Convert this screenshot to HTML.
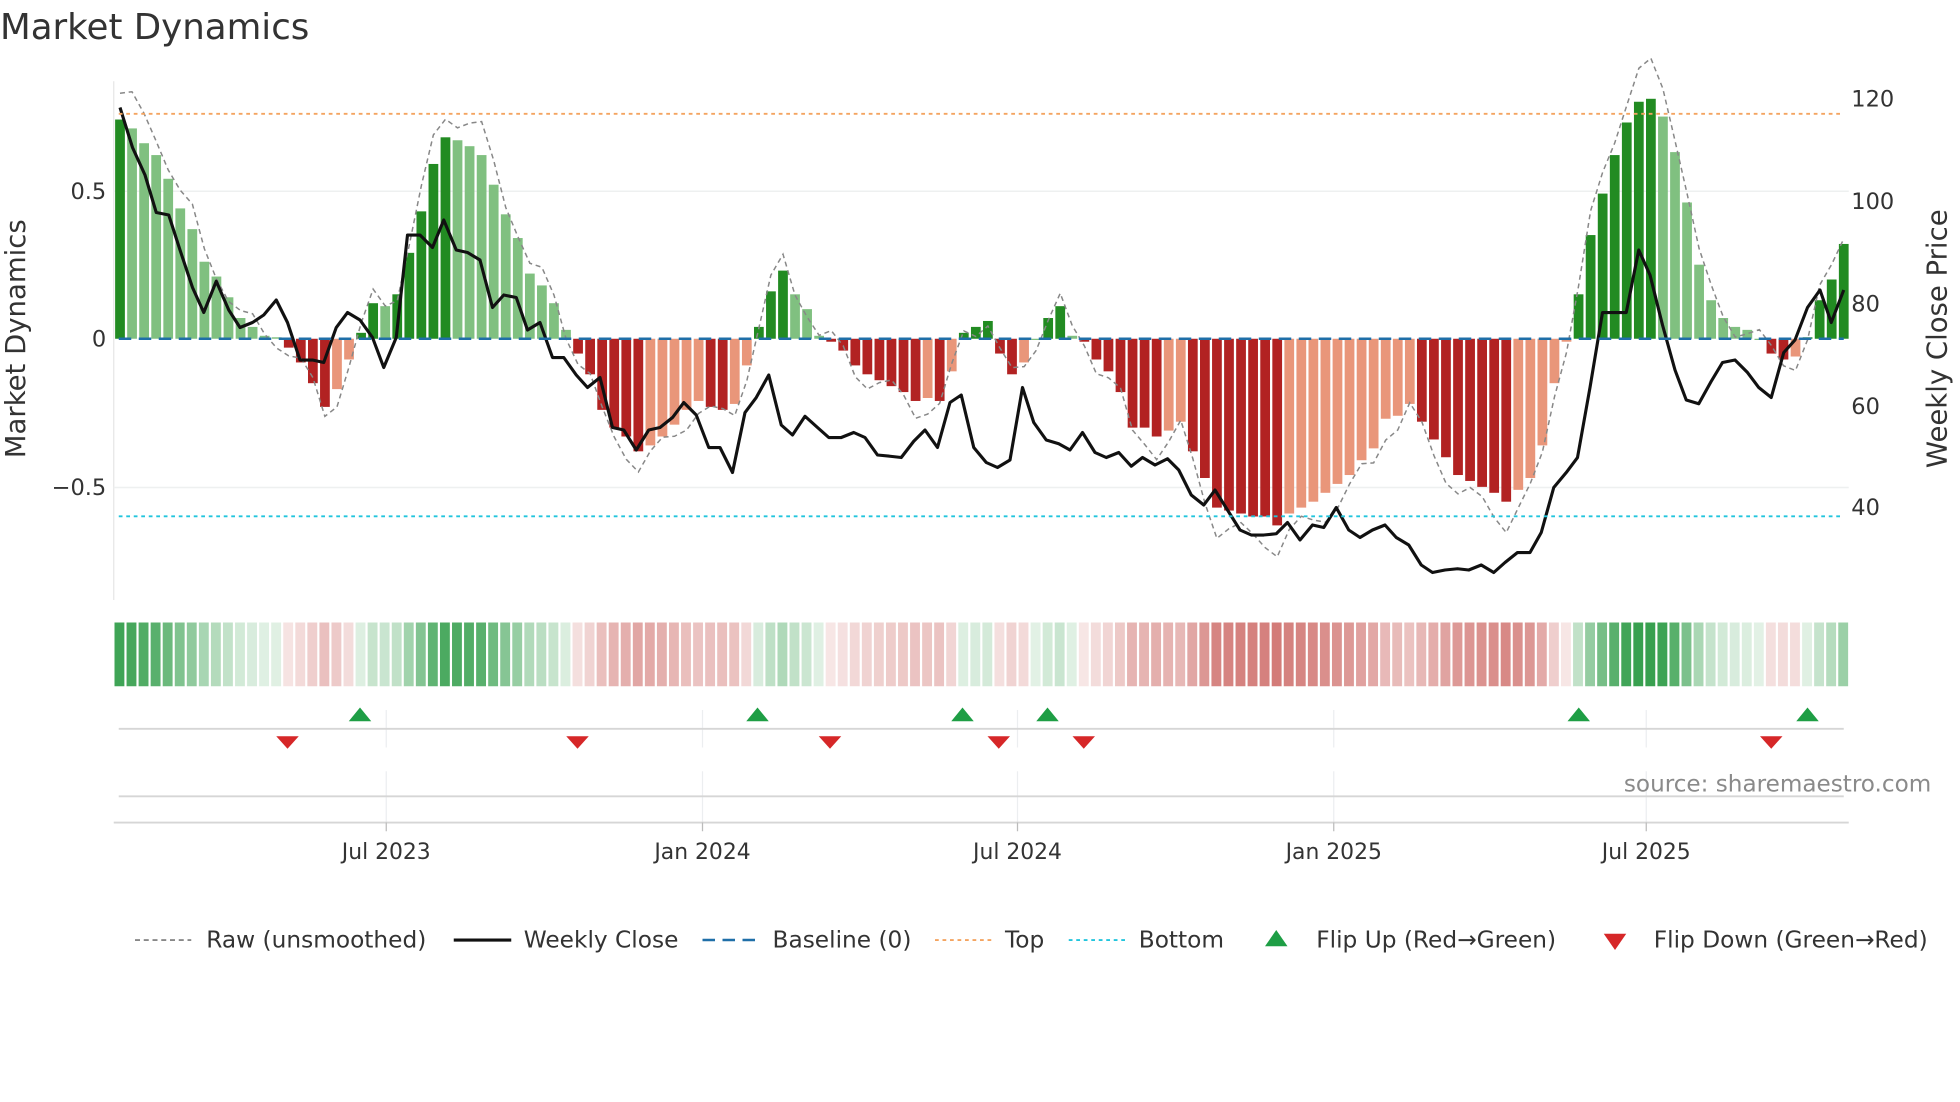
<!DOCTYPE html>
<html><head><meta charset="utf-8"><style>
html,body{margin:0;padding:0;background:#fff;}
svg{display:block;font-family:"DejaVu Sans","Liberation Sans",sans-serif;}
</style></head><body>
<svg id="s" width="1960" height="1102" viewBox="0 0 1568 881.6" xmlns="http://www.w3.org/2000/svg">
<rect width="1568" height="882" fill="#fff"/>
<text x="0" y="31" font-size="28.5" fill="#333">Market Dynamics</text>
<line x1="91" y1="65" x2="91" y2="480" stroke="#e6e6e6" stroke-width="1"/>
<line x1="91" y1="153" x2="1479" y2="153" stroke="#eef0f0" stroke-width="1.2"/>
<line x1="91" y1="390" x2="1479" y2="390" stroke="#eef0f0" stroke-width="1.2"/>
<g id="bars"></g>
<g id="lines"></g>
<line x1="95" y1="91" x2="1475" y2="91" stroke="#f4a460" stroke-width="1.5" stroke-dasharray="3,3"/>
<line x1="95" y1="413" x2="1475" y2="413" stroke="#22c5dd" stroke-width="1.5" stroke-dasharray="3,3"/>
<line x1="95" y1="271" x2="1475" y2="271" stroke="#1f6fa8" stroke-width="2" stroke-dasharray="10,6"/>
<g font-size="18" fill="#333" text-anchor="end">
<text x="85" y="159">0.5</text><text x="85" y="277">0</text><text x="85" y="396">−0.5</text>
</g>
<g font-size="18" fill="#333">
<text x="1481" y="85">120</text><text x="1481" y="167">100</text><text x="1481" y="249">80</text><text x="1481" y="331">60</text><text x="1481" y="412">40</text>
</g>
<text transform="translate(20,271) rotate(-90)" font-size="22" fill="#333" text-anchor="middle">Market Dynamics</text>
<text transform="translate(1557,271) rotate(-90)" font-size="22" fill="#333" text-anchor="middle">Weekly Close Price</text>
<g id="heat"></g>
<g stroke="#eceef0" stroke-width="1">
<line x1="309" y1="568" x2="309" y2="598"/><line x1="562" y1="568" x2="562" y2="598"/><line x1="814" y1="568" x2="814" y2="598"/><line x1="1067" y1="568" x2="1067" y2="598"/><line x1="1317" y1="568" x2="1317" y2="598"/>
<line x1="309" y1="617" x2="309" y2="658"/><line x1="562" y1="617" x2="562" y2="658"/><line x1="814" y1="617" x2="814" y2="658"/><line x1="1067" y1="617" x2="1067" y2="658"/><line x1="1317" y1="617" x2="1317" y2="658"/>
</g>
<line x1="95" y1="583" x2="1475" y2="583" stroke="#d6d6d6" stroke-width="1.5"/>
<line x1="95" y1="637" x2="1475" y2="637" stroke="#d6d6d6" stroke-width="1.5"/>
<line x1="91" y1="658" x2="1479" y2="658" stroke="#d6d6d6" stroke-width="1.5"/>
<g stroke="#bbb" stroke-width="1"><line x1="309" y1="658" x2="309" y2="665"/><line x1="562" y1="658" x2="562" y2="665"/><line x1="814" y1="658" x2="814" y2="665"/><line x1="1067" y1="658" x2="1067" y2="665"/><line x1="1317" y1="658" x2="1317" y2="665"/></g>
<g id="marks"></g>
<g font-size="17.5" fill="#333" text-anchor="middle">
<text x="309" y="687">Jul 2023</text><text x="562" y="687">Jan 2024</text><text x="814" y="687">Jul 2024</text><text x="1067" y="687">Jan 2025</text><text x="1317" y="687">Jul 2025</text>
</g>
<text x="1545" y="633" font-size="18.5" fill="#8a8a8a" text-anchor="end">source: sharemaestro.com</text>
<g font-size="18.6" fill="#333">
<line x1="108" y1="752" x2="153" y2="752" stroke="#777" stroke-width="1.3" stroke-dasharray="4,3"/>
<text x="165" y="758">Raw (unsmoothed)</text>
<line x1="363" y1="752" x2="409" y2="752" stroke="#111" stroke-width="2.5"/>
<text x="419" y="758">Weekly Close</text>
<line x1="562" y1="752" x2="607" y2="752" stroke="#1f6fa8" stroke-width="2" stroke-dasharray="10,6"/>
<text x="618" y="758">Baseline (0)</text>
<line x1="748" y1="752" x2="793" y2="752" stroke="#f4a460" stroke-width="1.5" stroke-dasharray="3,3"/>
<text x="804" y="758">Top</text>
<line x1="855" y1="752" x2="900" y2="752" stroke="#22c5dd" stroke-width="1.5" stroke-dasharray="3,3"/>
<text x="911" y="758">Bottom</text>
<polygon points="1021,744 1030,757 1012,757" fill="#1e9e45"/>
<text x="1053" y="758">Flip Up (Red→Green)</text>
<polygon points="1283,747 1301,747 1292,760" fill="#d62728"/>
<text x="1323" y="758">Flip Down (Green→Red)</text>
</g>
</svg>
<script>
var v=[0.74,0.71,0.66,0.62,0.54,0.44,0.37,0.26,0.21,0.14,0.07,0.04,0.01,0.005,-0.03,-0.08,-0.15,-0.23,-0.17,-0.07,0.02,0.12,0.11,0.15,0.29,0.43,0.59,0.68,0.67,0.65,0.62,0.52,0.42,0.34,0.22,0.18,0.12,0.03,-0.05,-0.12,-0.24,-0.30,-0.33,-0.38,-0.36,-0.33,-0.29,-0.24,-0.21,-0.23,-0.24,-0.22,-0.09,0.04,0.16,0.23,0.15,0.10,0.01,-0.01,-0.04,-0.09,-0.12,-0.14,-0.16,-0.18,-0.21,-0.20,-0.21,-0.11,0.02,0.04,0.06,-0.05,-0.12,-0.08,0.0,0.07,0.11,0.01,-0.01,-0.07,-0.11,-0.18,-0.30,-0.30,-0.33,-0.31,-0.28,-0.38,-0.47,-0.57,-0.58,-0.59,-0.60,-0.60,-0.63,-0.59,-0.57,-0.55,-0.52,-0.49,-0.46,-0.41,-0.37,-0.27,-0.26,-0.22,-0.28,-0.34,-0.40,-0.46,-0.48,-0.50,-0.52,-0.55,-0.51,-0.47,-0.36,-0.15,-0.01,0.15,0.35,0.49,0.62,0.73,0.80,0.81,0.75,0.63,0.46,0.25,0.13,0.07,0.04,0.03,0.0,-0.05,-0.07,-0.06,0.005,0.13,0.20,0.32];
var NS="http://www.w3.org/2000/svg";
function el(p,t,a){var e=document.createElementNS(NS,t);for(var k in a)e.setAttribute(k,a[k]);p.appendChild(e);return e;}
var bars=document.getElementById('bars'),heat=document.getElementById('heat'),lines=document.getElementById('lines');
var step=(1475-96)/143;
for(var i=0;i<v.length;i++){
 var x=96+i*step,val=v[i],prev=i>0?v[i-1]:0;
 var dark=Math.abs(val)>=Math.abs(prev)&&(val*prev>=0||i==0)||(val*prev<0);
 var col=val>=0?(dark?'#228b22':'#80c080'):(dark?'#b22222':'#e9967a');
 var h=Math.abs(val)*237,y=val>=0?271-h:271;
 el(bars,'rect',{x:x-3.9,y:y,width:7.8,height:Math.max(h,1),fill:col});
 var a=Math.min(1,0.15+Math.abs(val)*1.1);
 var hc=val>=0?'rgba(34,150,60,'+a*0.9+')':'rgba(190,60,55,'+Math.min(0.75,a*0.8)+')';
 el(heat,'rect',{x:x-4.4,y:498,width:7.9,height:51,fill:hc});
}
var rp=[];for(var i=0;i<v.length;i++){var r=v[i]*1.12+(Math.sin(i*1.3)*0.04);rp.push((96+i*step).toFixed(1)+','+(271-r*237).toFixed(1));}
el(lines,'polyline',{points:rp.join(' '),fill:'none',stroke:'#888','stroke-width':1.2,'stroke-dasharray':'4,3'});
var c="96,86 106,118 116,140 125,170 135,172 144,200 154,230 163,250 173,225 183,248 192,262 202,258 211,252 221,240 230,258 240,288 250,288 259,290 269,262 278,250 288,256 298,270 307,294 317,270 326,188 336,188 346,198 355,176 365,200 374,202 384,208 394,246 403,236 413,238 422,264 432,258 442,286 451,286 461,300 470,310 480,302 490,342 499,344 509,360 519,344 528,342 538,334 547,322 557,332 567,358 576,358 586,378 596,330 605,318 615,300 625,340 634,348 644,333 654,342 663,350 673,350 683,346 692,350 702,364 712,365 721,366 731,353 740,344 750,358 760,322 769,316 779,358 789,370 798,374 808,368 818,310 827,338 837,352 847,355 856,360 866,346 876,362 885,366 895,362 905,373 914,366 924,372 934,367 943,376 953,396 963,404 972,392 982,408 992,424 1001,428 1011,428 1021,427 1030,418 1040,432 1050,420 1059,422 1069,406 1079,424 1088,430 1098,424 1108,420 1117,430 1127,436 1137,452 1146,458 1156,456 1166,455 1175,456 1185,452 1195,458 1204,450 1214,442 1224,442 1233,426 1243,390 1253,378 1262,366 1272,310 1282,250 1291,250 1301,250 1311,200 1320,220 1330,260 1340,296 1349,320 1359,323 1369,305 1378,290 1388,288 1398,298 1407,310 1417,318 1427,282 1436,272 1446,246 1456,232 1465,258 1475,232";
el(lines,'polyline',{points:c,fill:'none',stroke:'#111','stroke-width':2.5,'stroke-linejoin':'round'});
var m=document.getElementById('marks');
[288,606,770,838,1263,1446].forEach(function(x){el(m,'polygon',{points:(x)+',566 '+(x+9)+',577 '+(x-9)+',577',fill:'#1e9e45'});});
[230,462,664,799,867,1417].forEach(function(x){el(m,'polygon',{points:(x-9)+',589 '+(x+9)+',589 '+x+',599',fill:'#d62728'});});
</script>
</body></html>
